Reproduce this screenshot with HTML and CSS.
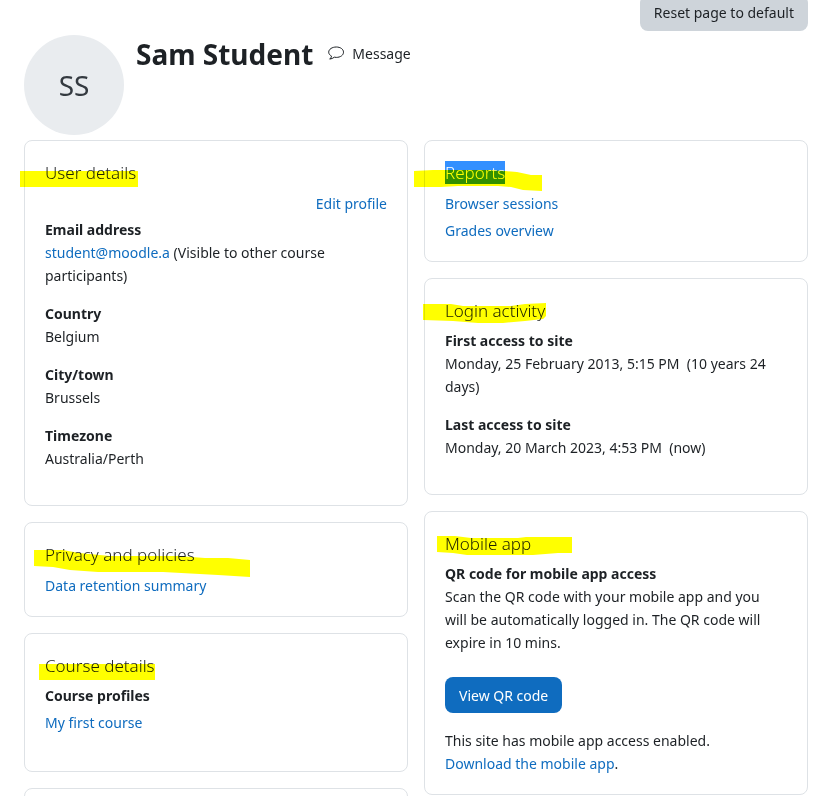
FILE: index.html
```html
<!DOCTYPE html>
<html lang="en">
<head>
    <meta charset="UTF-8">
    <meta name="viewport" content="width=device-width, initial-scale=1.0">
    <title>Sam Student: Profile</title>
    <link rel="stylesheet" href="styles.css">
</head>

<body>
    <div class="toolbar">
        <button class="btn btn-secondary" type="button">Reset page to default</button>
    </div>

    <header class="profile-header">
        <div class="avatar">SS</div>
        <h1>Sam Student</h1>
        <a class="message" href="#">
            <svg class="icon" viewBox="0 0 16 16" aria-hidden="true">
                <path d="M8.300 2C12.400 2 15.500 4.200 15.500 7.200s-3.100 5.200-7.200 5.200c-.7 0-1.400-.1-2-.2-1.200 1-2.700 1.700-4.600 1.900 1-.8 1.600-1.700 1.800-3C1.800 10.100.7 8.800.7 7.200.7 4.200 4.200 2 8.300 2z"/>
            </svg>
            Message
        </a>
    </header>

    <main class="profile">
        <div class="column">
            <section class="card">
                <h3>User details
                    <svg class="marker" aria-hidden="true"><path d="M7 10H125V26H7z"/></svg>
                </h3>
                <p class="edit"><a href="#">Edit profile</a></p>
                <dl>
                    <dt>Email address</dt>
                    <dd><a href="#">student@moodle.a</a> (Visible to other course participants)</dd>
                    <dt>Country</dt>
                    <dd>Belgium</dd>
                    <dt>City/town</dt>
                    <dd>Brussels</dd>
                    <dt>Timezone</dt>
                    <dd>Australia/Perth</dd>
                </dl>
            </section>

            <section class="card">
                <h3>Privacy and policies
                    <svg class="marker" aria-hidden="true"><path d="M21 7H50L66 10L97 13H165L192 15L215 15L237 17V34L205 32L150 29H85L57 27L40 24L21 23z"/></svg>
                </h3>
                <ul>
                    <li><a href="#">Data retention summary</a></li>
                </ul>
            </section>

            <section class="card">
                <h3>Course details
                    <svg class="marker" aria-hidden="true"><path d="M26 10H142V26H26z"/></svg>
                </h3>
                <dl>
                    <dt>Course profiles</dt>
                    <dd class="courses"><a href="#">My first course</a></dd>
                </dl>
            </section>

            <section class="card"></section>
        </div>

        <div class="column">
            <section class="card">
                <h3><span class="selected">Reports</span>
                    <svg class="marker" aria-hidden="true"><path d="M1 10L20 9H75L92 10L104 11L118 14H129V30L110 29L98 26L85 25H45L28 26H1z"/></svg>
                </h3>
                <ul>
                    <li><a href="#">Browser sessions</a></li>
                    <li><a href="#">Grades overview</a></li>
                </ul>
            </section>

            <section class="card">
                <h3>Login activity
                    <svg class="marker" aria-hidden="true"><path d="M10 5H38L50 7H98L112 5L133 4V17L130 20L112 22L90 24H65L40 22L10 21z"/></svg>
                </h3>
                <dl>
                    <dt>First access to site</dt>
                    <dd>Monday, 25 February 2013, 5:15 PM&nbsp; (10 years 24 days)</dd>
                    <dt>Last access to site</dt>
                    <dd>Monday, 20 March 2023, 4:53 PM&nbsp; (now)</dd>
                </dl>
            </section>

            <section class="card">
                <h3>Mobile app
                    <svg class="marker" aria-hidden="true"><path d="M24 4H42L58 6H105L113 5H159V21H145L120 23H54L40 21L24 20z"/></svg>
                </h3>
                <dl class="mobile">
                    <dt>QR code for mobile app access</dt>
                    <dd>Scan the QR code with your mobile app and you will be automatically logged in. The QR code will expire in 10 mins.</dd>
                </dl>
                <button class="btn btn-primary" type="button">View QR code</button>
                <p>This site has mobile app access enabled.</p>
                <p><a href="#">Download the mobile app</a>.</p>
            </section>
        </div>
    </main>
</body>
</html>
```
FILE: styles.css
```css
* {
    box-sizing: border-box;
}

body {
    margin: 0;
    padding: 0 13px 0 24px;
    background: #fff;
    color: #1d2125;
    font-family: "Noto Sans", "Open Sans", sans-serif;
    font-size: 14px;
    line-height: 23px;
}

h1, h3, p, ul, dl, dd {
    margin: 0;
    padding: 0;
}

ul {
    list-style: none;
}

a {
    color: #0f6cbf;
    text-decoration: none;
}

.btn {
    height: 36px;
    padding: 0 14px;
    border: 0;
    border-radius: 8px;
    font: inherit;
}

.btn-primary {
    margin: 23px 0 16px;
    background: #0f6cbf;
    color: #fff;
}

.btn-secondary {
    padding-bottom: 2px;
    background: #ced4da;
    color: #1d2125;
}

/* the button is scrolled a little above the top edge */
.toolbar {
    display: flex;
    justify-content: flex-end;
    margin-top: -5px;
}

.profile-header {
    display: flex;
    align-items: flex-start;
    margin: 4px 0 5px;
}

.avatar {
    display: flex;
    align-items: center;
    justify-content: center;
    width: 100px;
    height: 100px;
    margin-right: 12px;
    border-radius: 50%;
    background: #e9ecef;
    color: #343a40;
    font-size: 28px;
}

h1 {
    font-size: 28px;
    font-weight: 700;
    line-height: 38px;
}

.message {
    display: flex;
    align-items: center;
    gap: 8px;
    height: 36px;
    margin-left: 15px;
    color: #1d2125;
}

.icon {
    width: 16px;
    height: 16px;
    fill: none;
    stroke: #1d2125;
}

.profile {
    display: grid;
    grid-template-columns: 1fr 1fr;
    gap: 16px;
}

/* the last card runs on below the window */
.column {
    display: flex;
    flex-direction: column;
    gap: 16px;
}

.card {
    padding: 20px 20px 19px;
    border: 1px solid #dee2e6;
    border-radius: 8px;
}

h3 {
    position: relative;
    margin-bottom: 8px;
    font-size: 17px;
    font-weight: 300;
    line-height: 23px;
}

.selected {
    background: #3390ff;
    color: #fff;
}

.marker {
    position: absolute;
    top: 0;
    left: -32px;
    width: 240px;
    height: 36px;
    fill: #ff0;
    mix-blend-mode: multiply;
    pointer-events: none;
}

.edit {
    margin-bottom: 4px;
    text-align: right;
}

li + li {
    margin-top: 4px;
}

dt {
    font-weight: 700;
    line-height: 22px;
}

dd {
    margin-bottom: 16px;
}

.courses {
    padding: 4px 0 2px;
}

.mobile dd {
    margin-bottom: 0;
    padding-right: 12px;
}
```
